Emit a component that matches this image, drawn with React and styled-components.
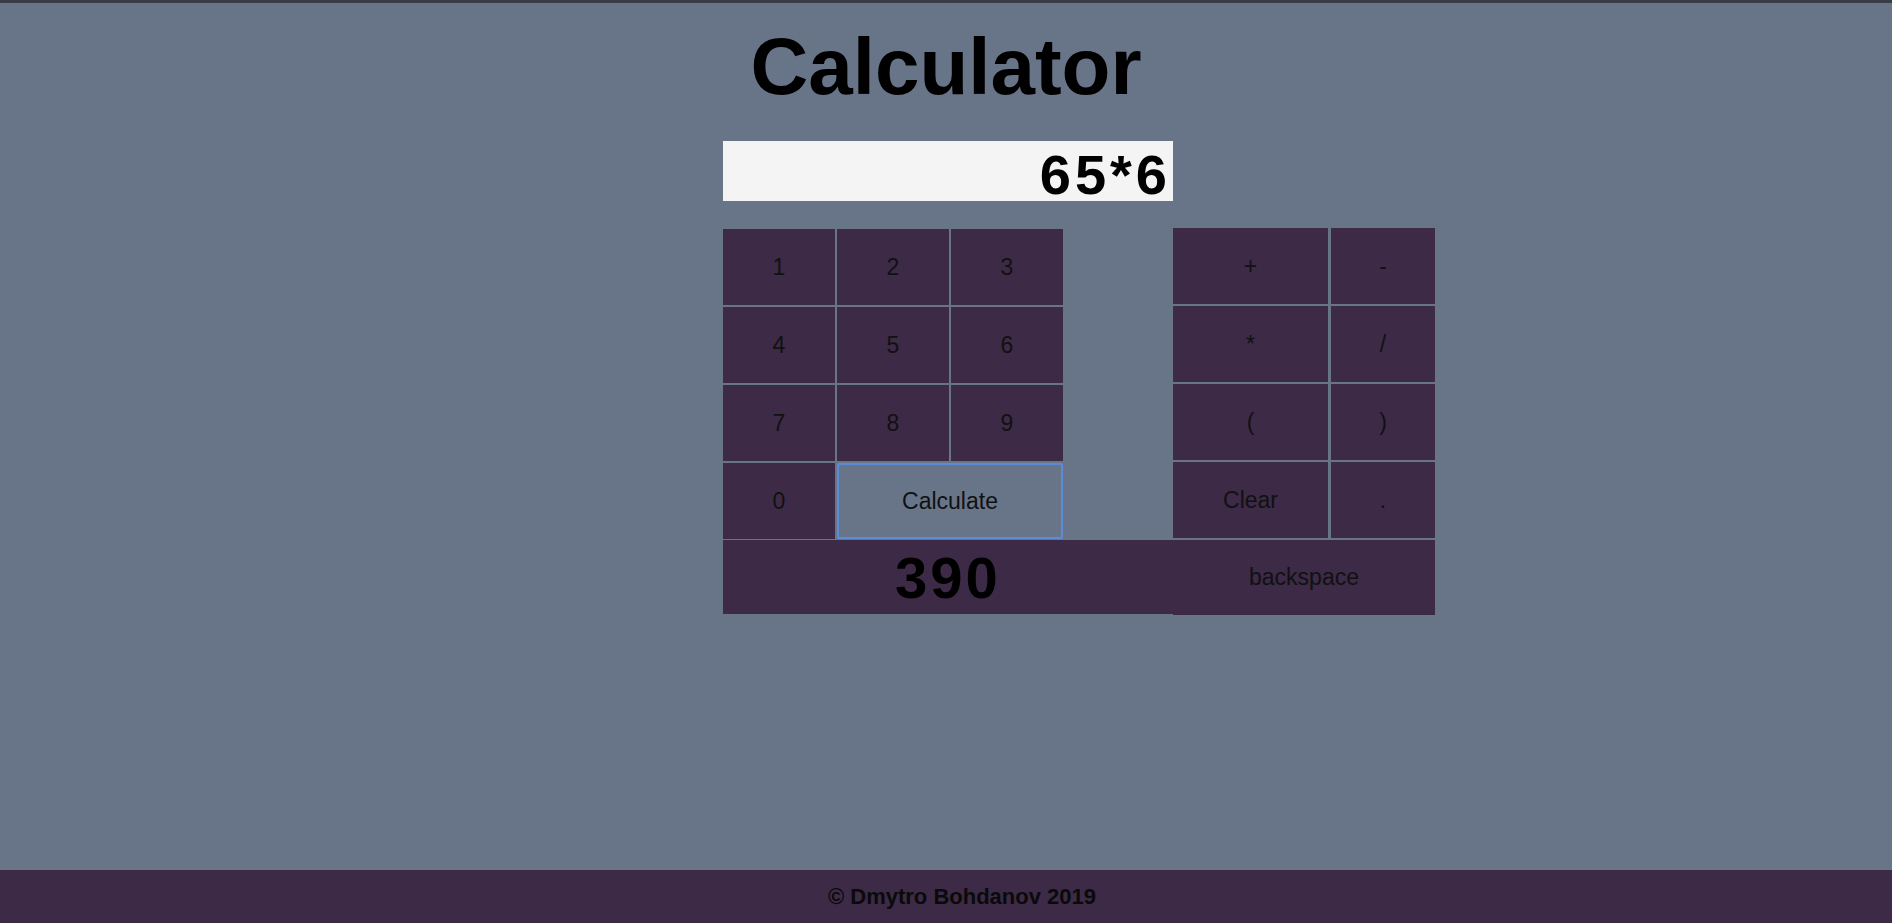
import React from "react";
import styled, { createGlobalStyle } from "styled-components";

const GlobalStyle = createGlobalStyle`
  html, body {
    margin: 0;
    padding: 0;
    background: #687588;
  }
  body {
    font-family: "Liberation Sans", Arial, sans-serif;
  }
`;

const Page = styled.div`
  min-height: 100vh;
  display: flex;
  flex-direction: column;
  border-top: 3px solid #383d45;
  box-sizing: border-box;
`;

const Title = styled.h1`
  margin: 18px 0 28px;
  text-align: center;
  font-size: 80px;
  font-weight: 700;
  color: #000;
`;

const Calc = styled.main`
  width: 712px;
  margin-left: calc(50% - 223px);
`;

const Display = styled.input`
  display: block;
  width: 450px;
  height: 60px;
  box-sizing: border-box;
  border: none;
  outline: none;
  padding: 6px 2px 0 0;
  background: #f4f4f4;
  text-align: right;
  font-family: "Liberation Sans", Arial, sans-serif;
  font-size: 56px;
  font-weight: 700;
  letter-spacing: 4px;
  color: #000;
`;

const KeypadRow = styled.div`
  display: flex;
  gap: 110px;
  margin-top: 27px;
`;

const Keys = styled.div`
  display: grid;
  grid-template-columns: ${p => p.cols};
  grid-auto-rows: 76px;
  column-gap: ${p => p.colGap || "2px"};
  row-gap: 2px;
  width: ${p => p.width};
  margin-top: ${p => p.offset || "0"};
`;

const Key = styled.button`
  grid-column: span ${p => p.span || 1};
  border: none;
  margin: 0;
  padding: 0;
  background: #3c2a47;
  color: #111;
  font-family: "Liberation Sans", Arial, sans-serif;
  font-size: 23px;
  cursor: pointer;
`;

const CalcKey = styled(Key)`
  background: #687588;
  border: 2px solid #5b8bd9;
  border-radius: 2px;
`;

const BottomRow = styled.div`
  display: flex;
  margin-top: 1px;
`;

const Result = styled.div`
  width: 450px;
  height: 74px;
  background: #3c2a47;
  display: flex;
  align-items: center;
  justify-content: center;
  font-size: 58px;
  font-weight: 700;
  letter-spacing: 3px;
  color: #000;
`;

const Backspace = styled(Key)`
  width: 262px;
  height: 75px;
`;

const Footer = styled.footer`
  margin-top: auto;
  height: 53px;
  background: #3c2a47;
  display: flex;
  align-items: center;
  justify-content: center;
  padding-left: 32px;
  font-size: 22px;
  font-weight: 700;
  color: #0a0a0a;
`;

const digits = ["1", "2", "3", "4", "5", "6", "7", "8", "9"];
const ops = ["+", "-", "*", "/", "(", ")", "Clear", "."];

export default function App() {
  return (
    <>
      <GlobalStyle />
      <Page>
        <Title>Calculator</Title>
        <Calc>
          <Display readOnly value="65*6" />
          <KeypadRow>
            <Keys cols="112px 112px 112px" width="340px" offset="1px">
              {digits.map(d => (
                <Key key={d}>{d}</Key>
              ))}
              <Key>0</Key>
              <CalcKey span={2}>Calculate</CalcKey>
            </Keys>
            <Keys cols="155px 104px" colGap="3px" width="262px">
              {ops.map(o => (
                <Key key={o}>{o}</Key>
              ))}
            </Keys>
          </KeypadRow>
          <BottomRow>
            <Result>390</Result>
            <Backspace>backspace</Backspace>
          </BottomRow>
        </Calc>
        <Footer>© Dmytro Bohdanov 2019</Footer>
      </Page>
    </>
  );
}
